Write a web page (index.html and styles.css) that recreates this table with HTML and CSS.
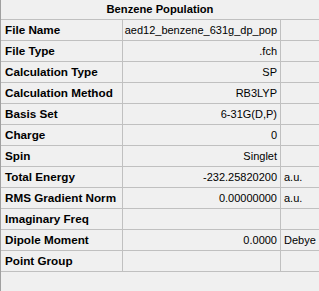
FILE: index.html
```html
<!DOCTYPE html>
<html>
  <head>
    <meta charset="UTF-8">
    <title>Benzene Population</title>
    <link rel="stylesheet" href="styles.css">
  </head>
  <body>
    <div id="panel">
      <!-- title row -->
      <div class="title">Benzene Population</div>
      <!-- property rows: label | value | unit -->
      <div class="row"><div class="label">File Name</div><div class="value">aed12_benzene_631g_dp_pop</div><div class="unit"></div></div>
      <div class="row"><div class="label">File Type</div><div class="value">.fch</div><div class="unit"></div></div>
      <div class="row"><div class="label">Calculation Type</div><div class="value">SP</div><div class="unit"></div></div>
      <div class="row"><div class="label">Calculation Method</div><div class="value">RB3LYP</div><div class="unit"></div></div>
      <div class="row"><div class="label">Basis Set</div><div class="value">6-31G(D,P)</div><div class="unit"></div></div>
      <div class="row"><div class="label">Charge</div><div class="value">0</div><div class="unit"></div></div>
      <div class="row"><div class="label">Spin</div><div class="value">Singlet</div><div class="unit"></div></div>
      <div class="row"><div class="label">Total Energy</div><div class="value">-232.25820200</div><div class="unit">a.u.</div></div>
      <div class="row"><div class="label">RMS Gradient Norm</div><div class="value">0.00000000</div><div class="unit">a.u.</div></div>
      <div class="row"><div class="label">Imaginary Freq</div><div class="value"></div><div class="unit"></div></div>
      <div class="row"><div class="label">Dipole Moment</div><div class="value">0.0000</div><div class="unit">Debye</div></div>
      <div class="row"><div class="label">Point Group</div><div class="value"></div><div class="unit"></div></div>
    </div>
  </body>
</html>
```
FILE: styles.css
```css
html, body {
  margin: 0;
  overflow: hidden;
  background-color: #f0f0f0;
}
body {
  font-family: "Liberation Sans", Arial, sans-serif;
  font-size: 11px;
  color: #000;
}
* {
  box-sizing: border-box;
}
#panel {
  height: 291px;
  width: 319px;
  overflow: hidden;
  border-left: 1px solid #a0a0a0;
}
.title {
  height: 20px;
  line-height: 19px;
  text-align: center;
  font-size: 11.2px;
  font-weight: bold;
  border-bottom: 1px solid #c0c0c0;
}
.row {
  display: grid;
  grid-template-columns: 122px 158px 1fr;
  height: 21px;
  border-bottom: 1px solid #c0c0c0;
}
.row > div {
  line-height: 20px;
  white-space: nowrap;
  overflow: hidden;
}
.label {
  font-size: 11.7px;
  font-weight: bold;
  padding-left: 4px;
  border-right: 1px solid #c0c0c0;
}
.value {
  text-align: right;
  padding-right: 3px;
  border-right: 1px solid #c0c0c0;
}
.unit {
  padding-left: 3px;
  overflow: hidden;
}
```
